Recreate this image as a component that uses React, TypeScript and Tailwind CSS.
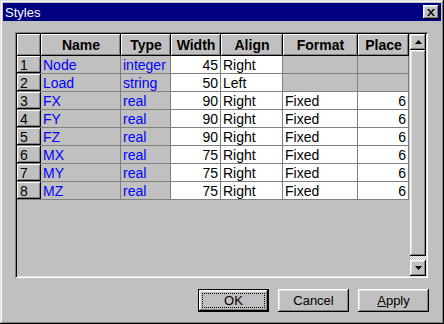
import React from 'react'

type Row = {
    name: string
    type: string
    width: number
    align: string
    format?: string
    place?: number
}

const rows: Row[] = [
    { name: 'Node', type: 'integer', width: 45, align: 'Right' },
    { name: 'Load', type: 'string', width: 50, align: 'Left' },
    { name: 'FX', type: 'real', width: 90, align: 'Right', format: 'Fixed', place: 6 },
    { name: 'FY', type: 'real', width: 90, align: 'Right', format: 'Fixed', place: 6 },
    { name: 'FZ', type: 'real', width: 90, align: 'Right', format: 'Fixed', place: 6 },
    { name: 'MX', type: 'real', width: 75, align: 'Right', format: 'Fixed', place: 6 },
    { name: 'MY', type: 'real', width: 75, align: 'Right', format: 'Fixed', place: 6 },
    { name: 'MZ', type: 'real', width: 75, align: 'Right', format: 'Fixed', place: 6 },
]

const raised = 'bg-[#c0c0c0] shadow-[inset_-1px_-1px_#000,inset_1px_1px_#fff,inset_-2px_-2px_#808080,inset_2px_2px_#dfdfdf]'
const headCell = 'bg-[#c0c0c0] shadow-[inset_-1px_-1px_#000,inset_1px_1px_#fff,inset_-2px_-2px_#808080] flex items-center justify-center font-bold text-[14px] h-[22px] shrink-0'
const cell = 'h-[18px] shrink-0 border-r border-b border-[#808080] flex items-center px-[2px] leading-none text-[14px]'

const Arrow = ({ up }: { up?: boolean }) => (
    <svg width="7" height="4" viewBox="0 0 7 4">
        <path d={up ? 'M3.5 0 L7 4 L0 4 Z' : 'M0 0 L7 0 L3.5 4 Z'} fill="#000" />
    </svg>
)

const App = () => {
    return (
        <div className="w-[444px] h-[324px] bg-[#c0c0c0] p-[3px] text-[13px] text-black shadow-[inset_-1px_-1px_#000,inset_1px_1px_#dfdfdf,inset_-2px_-2px_#808080,inset_2px_2px_#fff]" style={{ fontFamily: '"Liberation Sans", Arial, sans-serif' }}>
            {/* title bar */}
            <div className="h-[18px] bg-[#000080] flex items-center justify-between pl-[2px] pr-[2px]">
                <span className="text-white text-[13px] leading-none">Styles</span>
                <button className={`w-[16px] h-[14px] flex items-center justify-center ${raised}`}>
                    <svg width="8" height="7" viewBox="0 0 8 7">
                        <path d="M0 0 L2 0 L4 2.5 L6 0 L8 0 L5 3.5 L8 7 L6 7 L4 4.5 L2 7 L0 7 L3 3.5 Z" fill="#000" />
                    </svg>
                </button>
            </div>

            {/* grid frame */}
            <div className="mt-[11px] ml-[12px] w-[413px] h-[246px] p-[2px] flex gap-[1px] shadow-[inset_1px_1px_#808080,inset_-1px_-1px_#fff,inset_2px_2px_#000,inset_-2px_-2px_#dfdfdf]">
                <div className="w-[392px] flex flex-col">
                    <div className="flex">
                        <div className={`${headCell} w-[24px]`}></div>
                        <div className={`${headCell} w-[80px]`}>Name</div>
                        <div className={`${headCell} w-[50px]`}>Type</div>
                        <div className={`${headCell} w-[50px]`}>Width</div>
                        <div className={`${headCell} w-[62px]`}>Align</div>
                        <div className={`${headCell} w-[75px]`}>Format</div>
                        <div className={`${headCell} w-[51px]`}>Place</div>
                    </div>
                    {rows.map((r, i) => {
                        const fmtBg = r.format ? 'bg-white' : 'bg-[#c0c0c0]'
                        return (
                            <div key={r.name} className="flex">
                                <div className="w-[24px] h-[18px] shrink-0 border-b border-[#808080]">
                                    <div className="h-[17px] w-full flex items-center pl-[3px] leading-none text-[14px] shadow-[inset_-1px_-1px_#000,inset_1px_1px_#fff,inset_-2px_-2px_#808080]">{i + 1}</div>
                                </div>
                                <div className={`${cell} w-[80px] text-[#0000ff]`}>{r.name}</div>
                                <div className={`${cell} w-[50px] text-[#0000ff]`}>{r.type}</div>
                                <div className={`${cell} w-[50px] bg-white justify-end`}>{r.width}</div>
                                <div className={`${cell} w-[62px] bg-white`}>{r.align}</div>
                                <div className={`${cell} w-[75px] ${fmtBg}`}>{r.format}</div>
                                <div className={`${cell} w-[51px] ${fmtBg} justify-end`}>{r.place}</div>
                            </div>
                        )
                    })}
                </div>

                {/* scrollbar */}
                <div className="w-[16px] flex flex-col">
                    <div className={`h-[16px] flex items-center justify-center ${raised}`}><Arrow up /></div>
                    <div className={`h-[206px] ${raised}`}></div>
                    <div className="h-[4px] bg-[conic-gradient(#fff_25%,#c0c0c0_0_50%,#fff_0_75%,#c0c0c0_0)] bg-[length:2px_2px]"></div>
                    <div className={`h-[16px] flex items-center justify-center ${raised}`}><Arrow /></div>
                </div>
            </div>

            {/* buttons */}
            <div className="mt-[11px] flex justify-end gap-[9px] pr-[12px]">
                <button className="w-[71px] h-[23px] border border-black bg-[#c0c0c0] p-0">
                    <div className="w-full h-full p-[3px] shadow-[inset_-1px_-1px_#000,inset_1px_1px_#fff,inset_-2px_-2px_#808080,inset_2px_2px_#dfdfdf]">
                        <div className="w-full h-full border border-dotted border-black flex items-center justify-center leading-none">OK</div>
                    </div>
                </button>
                <button className={`w-[71px] h-[23px] flex items-center justify-center leading-none ${raised}`}>Cancel</button>
                <button className={`w-[71px] h-[23px] flex items-center justify-center leading-none ${raised}`}><span><span className="underline">A</span>pply</span></button>
            </div>
        </div>
    )
}

export default App
